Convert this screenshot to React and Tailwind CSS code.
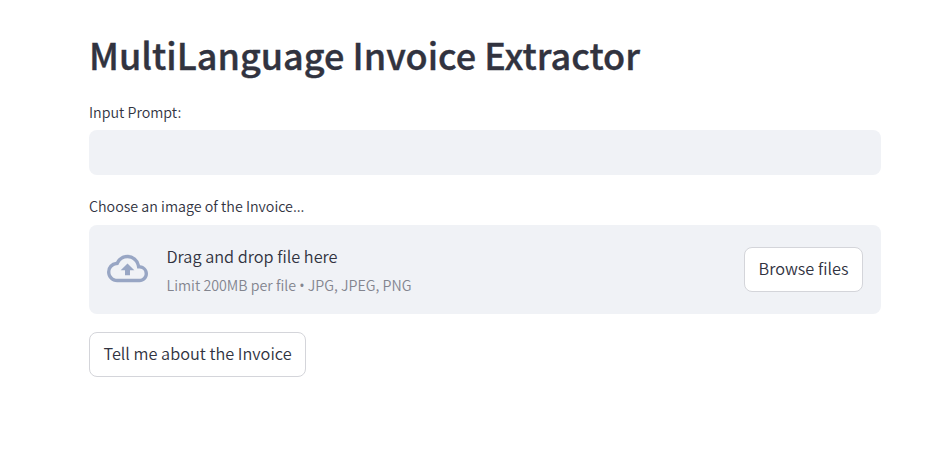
const FONT = "font-['Noto_Sans_CJK_SC','Noto_Sans',sans-serif]";

function CloudUpload() {
  return (
    <svg viewBox="0 0 24 24" className="mb-[2px] size-[41px] shrink-0 fill-[#98a6c4]" aria-hidden="true">
      <path d="M19.35 10.04A7.49 7.49 0 0 0 12 4C9.11 4 6.6 5.64 5.35 8.04A5.994 5.994 0 0 0 0 14c0 3.31 2.69 6 6 6h13c2.76 0 5-2.24 5-5 0-2.64-2.05-4.78-4.65-4.96zM19 18H6c-2.21 0-4-1.79-4-4 0-2.05 1.53-3.76 3.56-3.97l1.07-.11.5-.95A5.469 5.469 0 0 1 12 6c2.62 0 4.88 1.86 5.39 4.43l.3 1.5 1.53.11A2.98 2.98 0 0 1 22 15c0 1.65-1.35 3-3 3zM8 13h2.55v3h2.9v-3H16l-4-4z" />
    </svg>
  );
}

function Button({ children, className }) {
  return (
    <button className={`flex h-[45px] items-center justify-center rounded-lg border border-[#d4d5da] bg-white pb-[2px] text-[16.3px] whitespace-nowrap ${className}`}>
      {children}
    </button>
  );
}

export default function App() {
  return (
    <main className={`h-[455px] w-[938px] overflow-hidden bg-white pl-[89px] font-[350] text-[#31333f] ${FONT}`}>
      <div className="flex w-[792px] flex-col items-start">
        <h1 className="mt-[29px] h-[52px] text-[36.04px] leading-[50px] font-medium whitespace-nowrap [-webkit-text-stroke:0.4px_#31333f]">MultiLanguage Invoice Extractor</h1>
        <label htmlFor="prompt" className="mt-[19px] h-[25px] text-[14.25px] leading-[24px] whitespace-nowrap">Input Prompt:</label>
        <input id="prompt" className="mt-[5px] h-[45px] w-full rounded-lg bg-[#f0f2f6] px-3 outline-none" />
        <span className="mt-[19px] h-[25px] text-[14.25px] leading-[24px] whitespace-nowrap">Choose an image of the Invoice...</span>
        <section className="mt-[6px] flex h-[89px] w-full items-center rounded-lg bg-[#f0f2f6] px-[18px]">
          <CloudUpload />
          <div className="ml-[18.5px] flex flex-1 flex-col">
            <span className="text-[16.3px] leading-[30px] whitespace-nowrap">Drag and drop file here</span>
            <span className="h-[27px] text-[14.25px] leading-[28px] whitespace-nowrap text-[#83858f]">
              Limit 200MB per file <span className="font-['Open_Sans',sans-serif] font-normal">•</span> JPG, JPEG, PNG
            </span>
          </div>
          <Button className="w-[119px]">Browse files</Button>
        </section>
        <Button className="mt-[18px] w-[217px]">Tell me about the Invoice</Button>
      </div>
    </main>
  );
}
